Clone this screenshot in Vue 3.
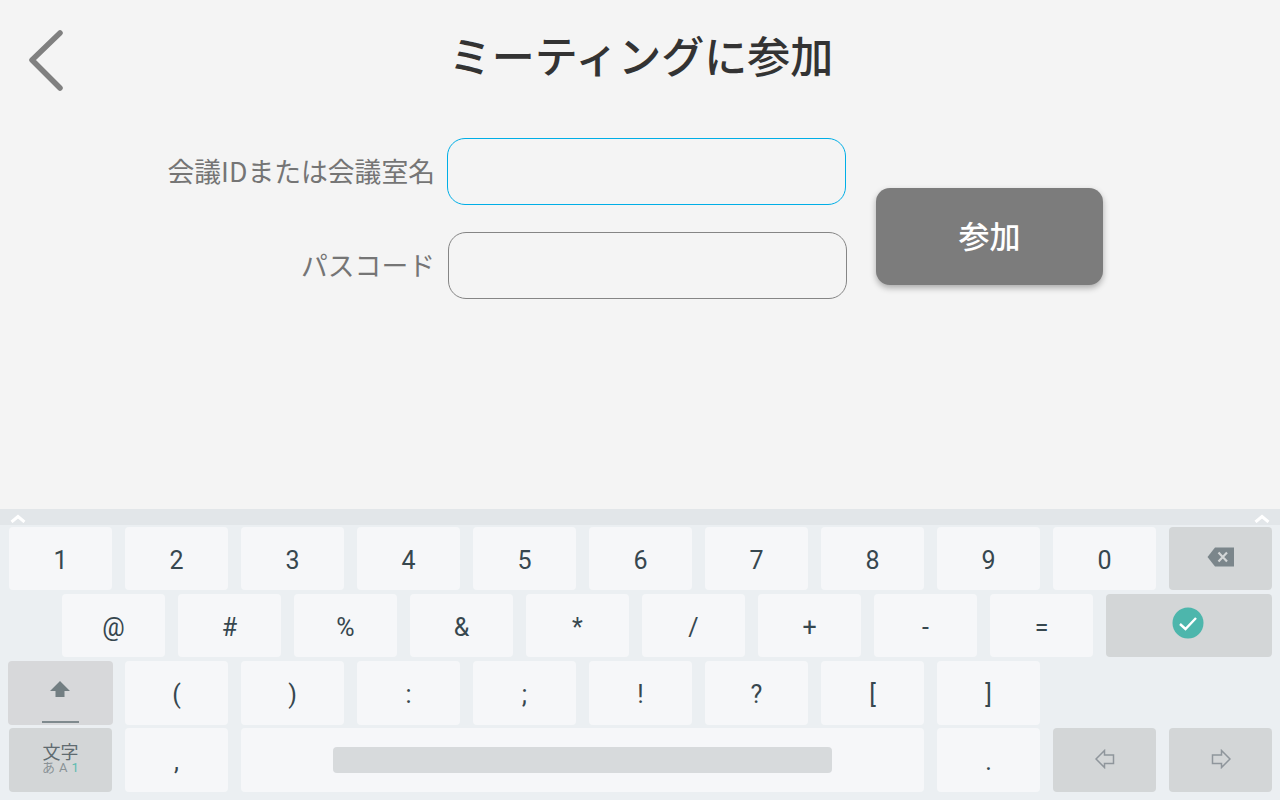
<template>
  <div class="page">
    <main class="main">
      <header class="header">
        <button class="back" aria-label="戻る">
          <svg width="40" height="68" viewBox="0 0 40 68">
            <path d="M33 6 L5 33 L33 61" fill="none" stroke="#808080" stroke-width="5.5" stroke-linecap="round" stroke-linejoin="round" />
          </svg>
        </button>
        <h1 class="title">ミーティングに参加</h1>
        <span></span>
      </header>

      <div class="form">
        <div class="fields">
          <label class="field">
            <span class="label">会議IDまたは会議室名</span>
            <input class="input active" type="text" />
          </label>
          <label class="field second">
            <span class="label">パスコード</span>
            <input class="input" type="password" />
          </label>
        </div>
        <button class="join">参加</button>
      </div>
    </main>

    <section class="keyboard">
      <div class="kb-top">
        <svg class="chev" width="16" height="9" viewBox="0 0 16 9"><path d="M1.5 8 L8 2.5 L14.5 8" fill="none" stroke="#fff" stroke-width="3" /></svg>
        <svg class="chev" width="16" height="9" viewBox="0 0 16 9"><path d="M1.5 8 L8 2.5 L14.5 8" fill="none" stroke="#fff" stroke-width="3" /></svg>
      </div>

      <div class="row row-1">
        <div v-for="k in row1" :key="k" class="key">{{ k }}</div>
        <div class="key fn">
          <svg class="bksp" width="28" height="20" viewBox="0 0 28 20">
            <path d="M8 0.5 H27 V19.5 H8 L0.5 10 Z" fill="#7b868b" />
            <path d="M11.5 5.5 L20 14.5 M20 5.5 L11.5 14.5" stroke="#d3d6d7" stroke-width="2.2" />
          </svg>
        </div>
      </div>

      <div class="row row-2">
        <div v-for="k in row2" :key="k" class="key">{{ k }}</div>
        <div class="key fn enter">
          <svg class="check" width="32" height="32" viewBox="0 0 32 32">
            <circle cx="16" cy="16" r="15.5" fill="#4db6ac" />
            <path d="M8 17 L13.5 22 L24 11" fill="none" stroke="#fff" stroke-width="2.4" />
          </svg>
        </div>
      </div>

      <div class="row row-3">
        <div class="key shift">
          <svg width="20" height="16" viewBox="0 0 20 16"><path d="M10 0 L20 10 H14.5 V16 H5.5 V10 H0 Z" fill="#727e82" /></svg>
          <span class="shift-bar"></span>
        </div>
        <div v-for="k in row3" :key="k" class="key">{{ k }}</div>
      </div>

      <div class="row row-4">
        <div class="key fn mode">
          <span class="mode-main">文字</span>
          <span class="mode-sub">あ A <em>1</em></span>
        </div>
        <div class="key">,</div>
        <div class="key space"><span class="space-bar"></span></div>
        <div class="key">.</div>
        <div class="key fn">
          <svg class="arrow" width="20" height="20" viewBox="0 0 20 20"><path d="M1 10 L9.5 1.5 V6 H18.5 V14.5 H9.5 V18.5 Z" fill="none" stroke="#8f969c" stroke-width="1.5" /></svg>
        </div>
        <div class="key fn">
          <svg class="arrow" width="20" height="20" viewBox="0 0 20 20"><path d="M19 10 L10.5 1.5 V6 H1.5 V14.5 H10.5 V18.5 Z" fill="none" stroke="#8f969c" stroke-width="1.5" /></svg>
        </div>
      </div>
    </section>
  </div>
</template>

<script setup>
const row1 = ['1', '2', '3', '4', '5', '6', '7', '8', '9', '0']
const row2 = ['@', '#', '%', '&', '*', '/', '+', '-', '=']
const row3 = ['(', ')', ':', ';', '!', '?', '[', ']']
</script>

<style>
html, body {
  margin: 0;
  background: #f4f4f4;
}
</style>

<style scoped>
.page {
  width: 1280px;
  height: 800px;
  display: flex;
  flex-direction: column;
  overflow: hidden;
  background: #f4f4f4;
  font-family: Roboto, "Noto Sans CJK JP", sans-serif;
}

.main {
  height: 509px;
  flex: none;
}

.header {
  height: 112px;
  display: grid;
  grid-template-columns: 1fr auto 1fr;
  align-items: start;
}

.back {
  width: 40px;
  height: 68px;
  margin: 27px 0 0 27px;
  padding: 0;
  border: 0;
  background: none;
  filter: blur(0.7px);
}

.back svg {
  display: block;
}

.title {
  margin: 25px 0 0 2px;
  font-family: "Noto Sans CJK JP", sans-serif;
  font-size: 43px;
  line-height: 58px;
  font-weight: 500;
  color: #333;
}

.form {
  display: flex;
  padding-top: 26px;
}

.fields {
  display: flex;
  flex-direction: column;
  gap: 27px;
}

.field {
  display: flex;
  align-items: center;
}

.label {
  width: 435px;
  margin-right: 12px;
  padding-bottom: 2px;
  text-align: right;
  font-family: "Noto Sans CJK JP", sans-serif;
  font-size: 26.8px;
  color: #757575;
}

.second {
  padding-left: 1px;
}

.second .label {
  width: 434px;
  margin-right: 13px;
}

.input {
  width: 399px;
  height: 67px;
  box-sizing: border-box;
  border: 1px solid #858585;
  border-radius: 18px;
  background: transparent;
  outline: none;
}

.input.active {
  border-color: #00aee6;
}

.join {
  width: 227px;
  height: 97px;
  margin: 50px 0 0 29px;
  padding: 0 0 5px;
  border: 0;
  border-radius: 14px;
  background: #7c7c7c;
  box-shadow: 0 3px 6px rgba(0, 0, 0, 0.3);
  color: #fff;
  font-family: "Noto Sans CJK JP", sans-serif;
  font-size: 31px;
  font-weight: 500;
}

.keyboard {
  flex: 1;
  background: #ebeff2;
  color: #37474f;
}

.kb-top {
  height: 16px;
  margin-bottom: 2px;
  padding: 0 10px;
  display: flex;
  justify-content: space-between;
  align-items: flex-start;
  background: #e2e6e9;
}

.chev {
  margin-top: 5px;
}

.row {
  display: flex;
  gap: 13px;
}

.row-1 {
  height: 63px;
  padding-left: 9px;
  margin-bottom: 4px;
}

.row-2 {
  height: 63px;
  padding-left: 62px;
  margin-bottom: 4px;
}

.row-3 {
  height: 64px;
  padding-left: 8px;
  margin-bottom: 3px;
}

.row-3 .key:first-child {
  margin-right: -1px;
}

.row-4 {
  height: 64px;
  padding-left: 9px;
}

.key {
  width: 103px;
  box-sizing: border-box;
  flex: none;
  display: flex;
  align-items: center;
  justify-content: center;
  padding-top: 3px;
  border-radius: 4px;
  background: #f6f7f9;
  font-size: 25px;
}

.fn {
  padding-top: 0;
  background: #d3d6d7;
}

.bksp {
  margin-top: -4px;
}

.enter {
  width: 166px;
}

.check {
  margin: -6px 2px 0 0;
}

.shift {
  width: 105px;
  padding-top: 0;
  position: relative;
  background: #d7d8da;
}

.shift svg {
  margin: -9px 2px 0 0;
}

.shift-bar {
  position: absolute;
  left: 34px;
  bottom: 2px;
  width: 37px;
  height: 2px;
  background: #7f8a8e;
}

.mode {
  flex-direction: column;
  padding-bottom: 6px;
  color: #5f6b70;
}

.mode-main {
  font-family: "Noto Sans CJK JP", sans-serif;
  font-size: 18px;
  line-height: 20px;
}

.mode-sub {
  font-size: 13px;
  line-height: 13px;
  letter-spacing: 0.4px;
  color: #8a9296;
}

.mode-sub em {
  font-style: normal;
  color: #5cbcb0;
}

.space {
  width: 683px;
  padding-top: 0;
}

.space-bar {
  width: 499px;
  height: 26px;
  border-radius: 4px;
  background: #d7dadc;
}

.arrow {
  margin: -2px 0 0;
}
</style>
